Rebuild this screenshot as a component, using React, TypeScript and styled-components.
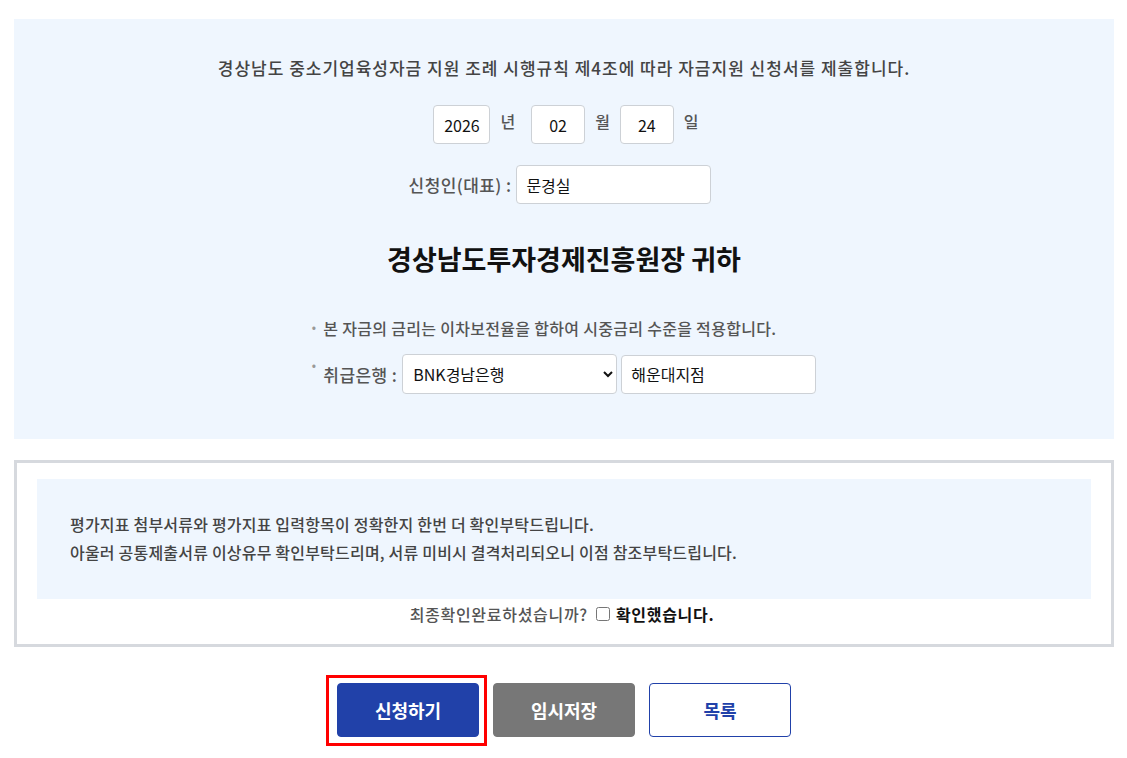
import React, { useState } from 'react'
import styled, { createGlobalStyle } from 'styled-components'

const GlobalStyle = createGlobalStyle`
  body {
    margin: 0;
    background: #fff;
    font-family: 'Noto Sans CJK KR', 'Noto Sans', Roboto, sans-serif;
    color: #222;
  }
`

const PageWrapper = styled.div`
  width: 1127px;
  padding: 19px 13px 20px 14px;
  box-sizing: border-box;
`

const FormPanel = styled.section`
  background-color: #eff6fe;
  padding: 37px 0 45px;
  display: flex;
  flex-direction: column;
  align-items: center;
`

const IntroText = styled.p`
  margin: 0;
  font-size: 17px;
  line-height: 24px;
  font-weight: 500;
  color: #444;
  letter-spacing: 1px;
`

const DateRow = styled.div`
  display: flex;
  align-items: center;
  margin-top: 25px;
  padding-left: 4px;
`

const TextInput = styled.input<{ w: number; center?: boolean }>`
  width: ${({ w }) => w}px;
  height: 39px;
  box-sizing: border-box;
  border: 1px solid #cdd1d6;
  border-radius: 4px;
  background: #fff;
  padding: 0 9px;
  font-family: 'Noto Sans CJK KR', Roboto, sans-serif;
  font-size: 16px;
  color: #111;
  text-align: ${({ center }) => (center ? 'center' : 'left')};
  outline: none;
`

const UnitLabel = styled.span<{ after?: number }>`
  font-size: 16px;
  font-weight: 500;
  color: #555;
  margin: -8px ${({ after = 16 }) => after}px 0 10px;
`

const FieldRow = styled.div`
  display: flex;
  align-items: center;
  margin-top: 21px;
  padding-right: 8px;
`

const FieldLabel = styled.span`
  font-size: 17px;
  font-weight: 500;
  color: #555;
  margin-right: 5px;
  letter-spacing: 0.4px;
`

const Addressee = styled.h2`
  margin: 38px 0 0;
  font-size: 27px;
  line-height: 34px;
  font-weight: 700;
  color: #111;
`

const NoticeList = styled.ul`
  list-style: none;
  margin: 40px 0 0;
  padding: 0;
  display: flex;
  flex-direction: column;
  gap: 14px;
`

const NoticeItem = styled.li`
  display: flex;
  align-items: center;
  font-size: 16px;
  font-weight: 500;
  color: #555;
  letter-spacing: 0.3px;

  &::before {
    content: '•';
    align-self: flex-start;
    color: #999;
    font-size: 12px;
    line-height: 22px;
    margin-right: 7px;
  }
`

const BankSelect = styled.select`
  width: 215px;
  height: 40px;
  box-sizing: border-box;
  border: 1px solid #cdd1d6;
  border-radius: 4px;
  background: #fff;
  padding: 0 6px;
  font-family: 'Noto Sans CJK KR', Roboto, sans-serif;
  font-size: 16px;
  color: #111;
  margin: 0 4px 0 0;
`

const ConfirmBox = styled.section`
  margin-top: 21px;
  border: 3px solid #d6d9de;
  padding: 16px 20px 19px;
`

const GuideBox = styled.div`
  background-color: #eff6fe;
  padding: 31px 33px 33px;
  font-size: 16px;
  line-height: 28px;
  font-weight: 500;
  color: #444;
  letter-spacing: 0.2px;
`

const CheckRow = styled.div`
  display: flex;
  justify-content: center;
  align-items: center;
  margin-top: 4px;
  font-size: 16px;
  line-height: 22px;
  font-weight: 500;
  color: #555;
  letter-spacing: 0.7px;
  padding-right: 4px;
`

const CheckLabel = styled.label`
  display: flex;
  align-items: center;
  margin-left: 8px;
  color: #111;
  font-weight: 700;

  input {
    width: 14px;
    height: 14px;
    margin: 0 6px 0 0;
  }
`

const ButtonRow = styled.div`
  display: flex;
  justify-content: center;
  gap: 14px;
  margin-top: 36px;
`

const ActionButton = styled.button<{ variant: 'primary' | 'gray' | 'outline'; highlighted?: boolean }>`
  position: relative;
  width: 142px;
  height: 54px;
  border-radius: 4px;
  font-family: 'Noto Sans CJK KR', Roboto, sans-serif;
  font-size: 18px;
  font-weight: 700;
  cursor: pointer;
  border: 1px solid
    ${({ variant }) => (variant === 'primary' ? '#2141a9' : variant === 'gray' ? '#777' : '#2141a9')};
  background-color: ${({ variant }) =>
    variant === 'primary' ? '#2141a9' : variant === 'gray' ? '#777' : '#fff'};
  color: ${({ variant }) => (variant === 'outline' ? '#2141a9' : '#fff')};

  ${({ highlighted }) =>
    highlighted &&
    `
    &::after {
      content: '';
      position: absolute;
      top: -9px;
      left: -12px;
      right: -9px;
      bottom: -10px;
      border: 3px solid #f00;
      pointer-events: none;
    }
  `}
`

export default function App() {
  const [confirmed, setConfirmed] = useState(false)

  return (
    <PageWrapper>
      <GlobalStyle />
      <FormPanel>
        <IntroText>경상남도 중소기업육성자금 지원 조례 시행규칙 제4조에 따라 자금지원 신청서를 제출합니다.</IntroText>
        <DateRow>
          <TextInput w={57} center defaultValue="2026" />
          <UnitLabel>년</UnitLabel>
          <TextInput w={54} center defaultValue="02" />
          <UnitLabel after={10}>월</UnitLabel>
          <TextInput w={54} center defaultValue="24" />
          <UnitLabel after={0}>일</UnitLabel>
        </DateRow>
        <FieldRow>
          <FieldLabel>신청인(대표) :</FieldLabel>
          <TextInput w={195} defaultValue="문경실" />
        </FieldRow>
        <Addressee>경상남도투자경제진흥원장 귀하</Addressee>
        <NoticeList>
          <NoticeItem>본 자금의 금리는 이차보전율을 합하여 시중금리 수준을 적용합니다.</NoticeItem>
          <NoticeItem>
            <FieldLabel>취급은행 :</FieldLabel>
            <BankSelect defaultValue="bnk">
              <option value="bnk">BNK경남은행</option>
            </BankSelect>
            <TextInput w={195} defaultValue="해운대지점" />
          </NoticeItem>
        </NoticeList>
      </FormPanel>

      <ConfirmBox>
        <GuideBox>
          평가지표 첨부서류와 평가지표 입력항목이 정확한지 한번 더 확인부탁드립니다.
          <br />
          아울러 공통제출서류 이상유무 확인부탁드리며, 서류 미비시 결격처리되오니 이점 참조부탁드립니다.
        </GuideBox>
        <CheckRow>
          최종확인완료하셨습니까?
          <CheckLabel>
            <input type="checkbox" checked={confirmed} onChange={() => setConfirmed(!confirmed)} />
            확인했습니다.
          </CheckLabel>
        </CheckRow>
      </ConfirmBox>

      <ButtonRow>
        <ActionButton variant="primary" highlighted>
          신청하기
        </ActionButton>
        <ActionButton variant="gray">임시저장</ActionButton>
        <ActionButton variant="outline">목록</ActionButton>
      </ButtonRow>
    </PageWrapper>
  )
}
